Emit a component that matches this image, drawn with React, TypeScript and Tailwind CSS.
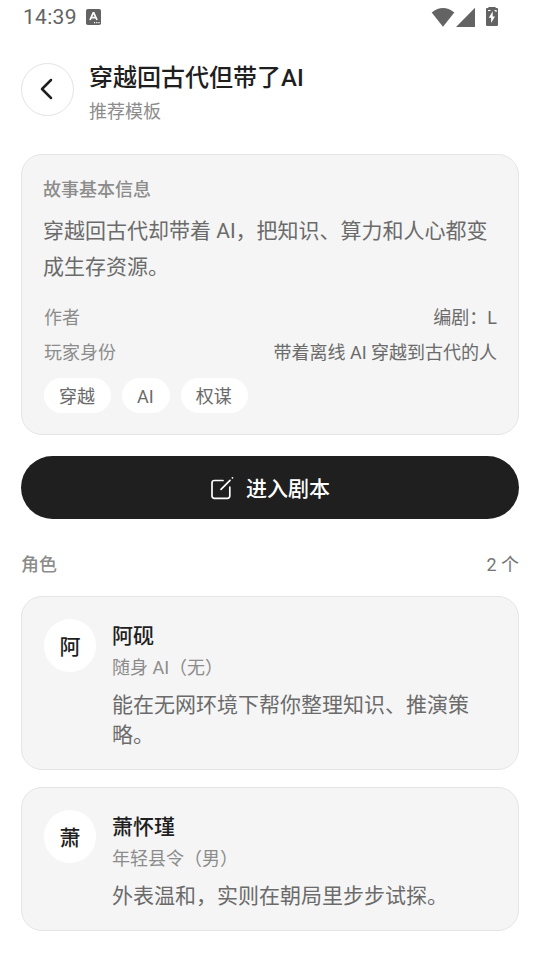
import React from "react";

const tags = ["穿越", "AI", "权谋"];

const facts = [
  { label: "作者", value: "编剧：L" },
  { label: "玩家身份", value: "带着离线 AI 穿越到古代的人" },
];

const roles = [
  {
    initial: "阿",
    name: "阿砚",
    meta: "随身 AI（无）",
    desc: "能在无网环境下帮你整理知识、推演策略。",
  },
  {
    initial: "萧",
    name: "萧怀瑾",
    meta: "年轻县令（男）",
    desc: "外表温和，实则在朝局里步步试探。",
  },
];

const StatusBar: React.FC = () => (
  <div className="flex h-[34px] items-center justify-between pl-[23px] pr-[42px] text-[#636363]">
    <div className="flex items-center gap-[9px]">
      <span className="text-[21px] leading-[34px] tracking-[0.3px]">14:39</span>
      <svg width="15" height="16" viewBox="0 0 15 16">
        <rect width="15" height="16" rx="1.8" fill="#636363" />
        <path d="M4 11 7.2 3.8h.6L11 11M5.2 8.6h4.6" fill="none" stroke="#fff" strokeWidth="1.7" />
        <path d="M8 13.6h1.2M10.2 13.6h1.2M12.4 13.6h1.2" stroke="#fff" strokeWidth="1.2" />
      </svg>
    </div>
    <div className="flex items-center">
      <svg width="24" height="20" viewBox="0 0 24 20">
        <path d="M.7 5.400Q12-3.400 23.3 5.400L12 19.800z" fill="#636363" />
      </svg>
      <svg width="19" height="20" viewBox="0 0 19 20" className="ml-px">
        <path d="M19 .8V20H0z" fill="#636363" />
      </svg>
      <svg width="12" height="20" viewBox="0 0 12 20" className="ml-[11px]">
        <path d="M2.4 0h7.2v1H11a1 1 0 0 1 1 1v15.700a1.300 1.300 0 0 1-1.300 1.300H1.300A1.300 1.300 0 0 1 0 17.700V2a1 1 0 0 1 1-1h1.400z" fill="#636363" />
        <path d="M6.700 4.200 2.800 10.800h2.300V16l3.900-6.600H6.700z" fill="#fff" />
        <path d="M2 3.500h2.500M8.500 3.500h1.500v1.500" fill="none" stroke="#fff" strokeWidth="1.2" />
      </svg>
    </div>
  </div>
);

const Header: React.FC = () => (
  <header className="flex h-[53px] items-center">
    <button className="flex h-[53px] w-[53px] shrink-0 items-center justify-center rounded-full border border-[#e3e3e3] bg-white">
      <svg width="14" height="22" viewBox="0 0 14 22" fill="none" stroke="#1f1f1f" strokeWidth="2.5" strokeLinecap="round" strokeLinejoin="round" className="mb-0.5 mr-px">
        <path d="M11 2 2 11l9 9" />
      </svg>
    </button>
    <div className="ml-[15px] pt-[11px]">
      <h1 className="text-2xl font-medium leading-[34px] text-[#1f1f1f]">穿越回古代但带了AI</h1>
      <p className="text-lg leading-[34px] text-[#8c8c8c]">推荐模板</p>
    </div>
  </header>
);

const StoryInfo: React.FC = () => (
  <section className="mt-[38px] h-[281px] rounded-[21px] border border-[#e5e5e5] bg-[#f5f5f5] px-[21px] pt-[22px]">
    <h2 className="text-lg font-medium leading-[26px] text-[#8c8c8c]">故事基本信息</h2>
    <p className="mt-[10px] text-[21px] leading-9 text-[#6b6b6b]">
      穿越回古代却带着 AI，把知识、算力和人心都变成生存资源。
    </p>
    <dl className="mt-[15px] pl-px">
      {facts.map((fact) => (
        <div key={fact.label} className="flex justify-between text-lg leading-[35px]">
          <dt className="text-[#8c8c8c]">{fact.label}</dt>
          <dd className="text-[#6b6b6b]">{fact.value}</dd>
        </div>
      ))}
    </dl>
    <div className="mt-[8px] flex gap-[11px] pl-px">
      {tags.map((tag) => (
        <span key={tag} className="h-[35px] rounded-full bg-white pl-[15px] pr-4 pt-px text-lg leading-[35px] text-[#6b6b6b]">
          {tag}
        </span>
      ))}
    </div>
  </section>
);

export default function App() {
  return (
    <div lang="zh-CN" className="h-[960px] w-[540px] overflow-hidden bg-white font-[Roboto,'Noto_Sans_CJK_SC',sans-serif]">
      <StatusBar />
      <main className="px-[21px] pt-[29px]">
        <Header />
        <StoryInfo />

        <button className="mt-[21px] flex h-[63px] w-full items-center justify-center rounded-full bg-[#1f1f1f] text-white">
          <svg width="24" height="24" viewBox="0 0 24 24" fill="none" stroke="currentColor" strokeWidth="1.7" strokeLinecap="round" strokeLinejoin="round">
            <path d="M13 4.500H4.300A2.300 2.300 0 0 0 2 6.800v13.200A2.300 2.300 0 0 0 4.300 22.300H17.500a2.300 2.300 0 0 0 2.300-2.300V11M11 13.300 20 4.300M22.400 1.900l.1-.1" />
          </svg>
          <span className="ml-3 pt-0.5 text-[21px] font-medium leading-8">进入剧本</span>
        </button>

        <div className="mt-[33px] flex justify-between text-lg leading-[26px]">
          <h2 className="font-medium text-[#8c8c8c]">角色</h2>
          <span className="text-[#757575]">2 个</span>
        </div>

        <div className="mt-[18px] flex flex-col gap-[17px]">
          {roles.map((role) => (
            <article key={role.name} className="flex rounded-[21px] border border-[#e5e5e5] bg-[#f5f5f5] pb-[19px] pl-[22px] pr-[21px] pt-[22px]">
              <div className="flex h-[53px] w-[52px] shrink-0 items-center justify-center rounded-full bg-white pt-0.5 text-[21px] font-medium leading-8 text-[#1f1f1f]">
                {role.initial}
              </div>
              <div className="ml-4 pt-px">
                <h3 className="text-[21px] font-medium leading-8 text-[#1f1f1f]">{role.name}</h3>
                <p className="mt-px text-lg leading-[30px] text-[#8c8c8c]">{role.meta}</p>
                <p className="mt-[7px] text-[21px] leading-[30px] text-[#6b6b6b]">{role.desc}</p>
              </div>
            </article>
          ))}
        </div>
      </main>
    </div>
  );
}
